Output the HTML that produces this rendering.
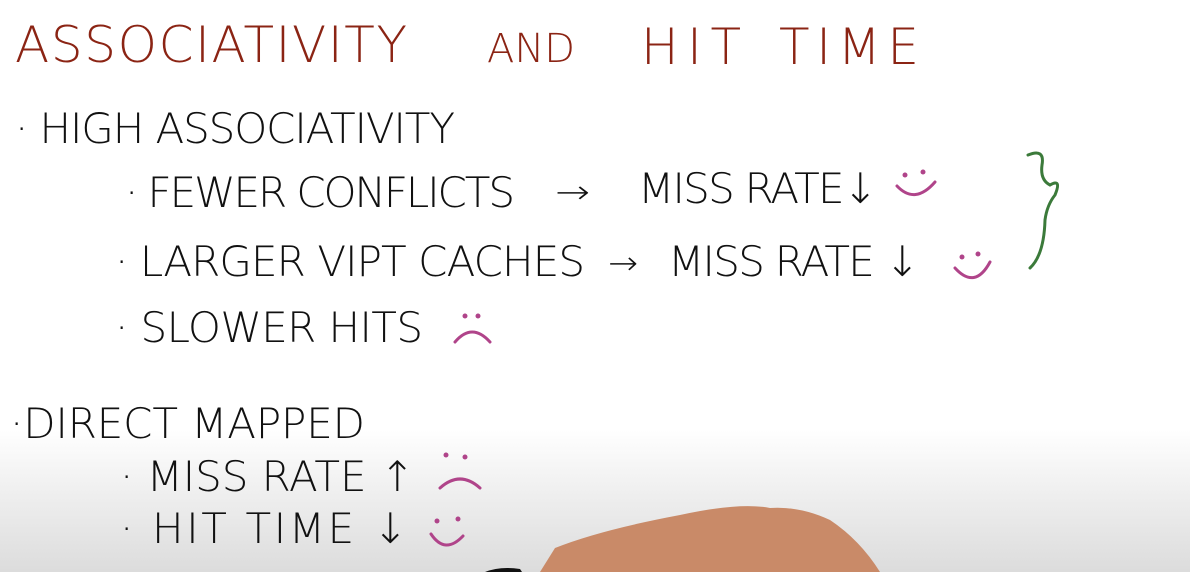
<!DOCTYPE html>
<html><head><style>
html,body{margin:0;padding:0}
body{width:1190px;height:572px;overflow:hidden;background:linear-gradient(#fff 0,#fff 430px,#f2f2f2 480px,#dcdcdc 572px)}
svg{position:absolute;left:0;top:0}
text{font-family:"DejaVu Sans","Liberation Sans",sans-serif;font-weight:200}
</style></head><body>
<svg width="1190" height="572" viewBox="0 0 1190 572">
<g fill="#8b2414" font-size="50">
<text x="15" y="62" textLength="392" lengthAdjust="spacing">ASSOCIATIVITY</text>
<text x="487" y="62" font-size="40" textLength="88" lengthAdjust="spacingAndGlyphs">AND</text>
<text x="641" y="64" textLength="100" lengthAdjust="spacing">HIT</text>
<text x="779" y="64" textLength="140" lengthAdjust="spacing">TIME</text>
</g>
<g fill="#111" font-size="42">
<text x="15" y="143" textLength="440" lengthAdjust="spacing">· HIGH ASSOCIATIVITY</text>
<text x="125" y="207" textLength="390" lengthAdjust="spacing">· FEWER CONFLICTS</text>
<text x="555" y="203" font-size="32" textLength="35" lengthAdjust="spacingAndGlyphs">→</text>
<text x="638" y="203" textLength="240" lengthAdjust="spacing">MISS RATE↓</text>
<text x="115" y="276" textLength="470" lengthAdjust="spacing">· LARGER VIPT CACHES</text>
<text x="608" y="274" font-size="32" textLength="30" lengthAdjust="spacingAndGlyphs">→</text>
<text x="668" y="276" textLength="252" lengthAdjust="spacing">MISS RATE ↓</text>
<text x="115" y="342" textLength="308" lengthAdjust="spacing">· SLOWER HITS</text>
<text x="10" y="438" textLength="355" lengthAdjust="spacing">·DIRECT MAPPED</text>
<text x="120" y="491" textLength="295" lengthAdjust="spacing">· MISS RATE ↑</text>
<text x="120" y="543" textLength="288" lengthAdjust="spacing">· HIT TIME ↓</text>
</g>
<g fill="none" stroke="#b0448a" stroke-width="3" stroke-linecap="round">
<path d="M897 186 Q915 205 935 182"/><path d="M955 268 Q975 290 990 262"/>
<path d="M455 342 Q472 322 490 342"/><path d="M440 488 Q460 470 480 488"/>
<path d="M431 534 Q445 555 463 536"/>
</g>
<g fill="#b0448a">
<circle cx="905" cy="175" r="2.5"/><circle cx="923" cy="172" r="2.5"/>
<circle cx="962" cy="257" r="2.5"/><circle cx="978" cy="254" r="2.5"/>
<circle cx="465" cy="316" r="2.5"/><circle cx="478" cy="316" r="2.5"/>
<circle cx="446" cy="455" r="2.5"/><circle cx="465" cy="457" r="2.5"/>
<circle cx="437" cy="521" r="2.5"/><circle cx="458" cy="519" r="2.5"/>
</g>
<path d="M1028 155 Q1045 148 1042 165 Q1040 180 1050 185 Q1062 178 1055 195 Q1047 205 1045 220 Q1044 255 1030 268" fill="none" stroke="#3b7a3a" stroke-width="3" stroke-linecap="round"/>
<path d="M540 572 L555 548 Q600 530 680 515 Q740 502 770 508 Q800 506 830 520 Q860 540 880 572 Z" fill="#c98a68"/>
<path d="M485 572 Q500 566 520 569 L522 572 Z" fill="#111"/>
</svg>
</body></html>
